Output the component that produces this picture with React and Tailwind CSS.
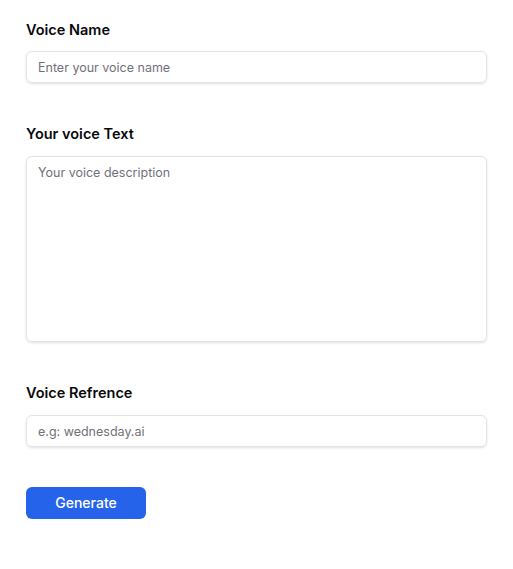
import React, { useState } from 'react'

export default function App() {
  const [form, setForm] = useState({ name: '', text: '', ref: '' })

  return (
    <div className="min-h-screen bg-white px-[26px] pt-5 font-['Inter',sans-serif] text-[#09090b]">
      <div className="flex flex-col">
        <label className="text-[14.5px] font-semibold leading-5">Voice Name</label>
        <input
          type="text"
          placeholder="Enter your voice name"
          value={form.name}
          onChange={e => setForm({ ...form, name: e.target.value })}
          className="mt-[11px] h-8 w-full rounded-md border border-[#e4e4e7] px-[11px] text-[12.5px] placeholder:text-[#71717a] shadow-sm focus:outline-none"
        />

        <label className="mt-[41px] text-[14.5px] font-semibold leading-5">Your voice Text</label>
        <textarea
          placeholder="Your voice description"
          value={form.text}
          onChange={e => setForm({ ...form, text: e.target.value })}
          className="mt-3 h-[186px] w-full resize-none rounded-md border border-[#e4e4e7] px-[11px] pt-[6px] text-[12.5px] leading-5 placeholder:text-[#71717a] shadow-sm focus:outline-none"
        />

        <label className="mt-[41px] text-[14.5px] font-semibold leading-5">Voice Refrence</label>
        <input
          type="text"
          placeholder="e.g: wednesday.ai"
          value={form.ref}
          onChange={e => setForm({ ...form, ref: e.target.value })}
          className="mt-[12px] h-8 w-full rounded-md border border-[#e4e4e7] px-[11px] text-[12.5px] placeholder:text-[#71717a] shadow-sm focus:outline-none"
        />

        <button className="mt-10 h-8 w-[120px] rounded-md bg-[#2563eb] text-sm font-medium text-white">
          Generate
        </button>
      </div>
    </div>
  )
}
